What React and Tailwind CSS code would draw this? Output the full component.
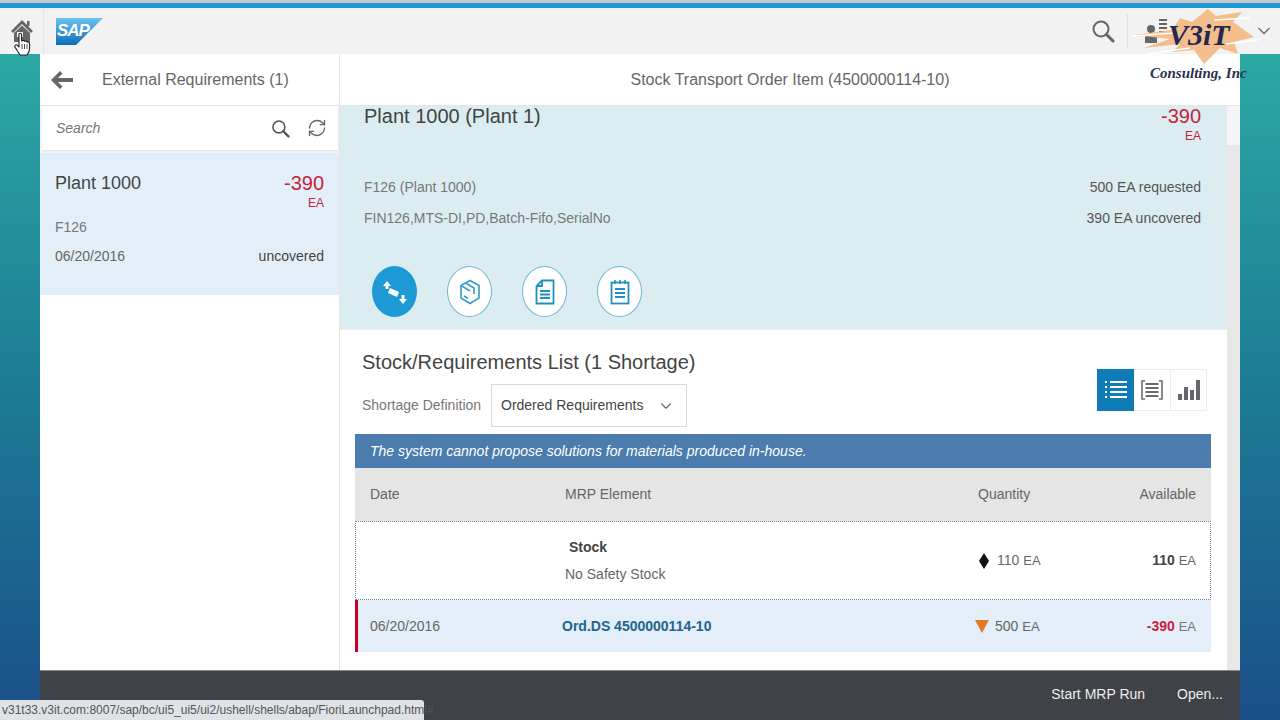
import React from "react";
import { ChevronDown, RefreshCw } from "lucide-react";

const font = { fontFamily: '"Liberation Sans", Arial, sans-serif' };

const SearchIcon = ({ size = 20, className = "" }) => (
  <svg width={size} height={size} viewBox="0 0 24 24" fill="none" className={className}>
    <circle cx="10" cy="10" r="7.5" stroke="currentColor" strokeWidth="2" />
    <path d="M15.5 15.5 L22 22" stroke="currentColor" strokeWidth="3" strokeLinecap="round" />
  </svg>
);

const HomeIcon = () => (
  <svg width="22" height="24" viewBox="0 0 22 24" className="text-[#666]">
    <path d="M0 12 L11 1 L22 12 L20 14 L11 5 L2 14 Z" fill="currentColor" />
    <path d="M3 14 L11 6.5 L19 14 V23 H3 Z" fill="currentColor" />
    <rect x="6" y="13" width="6" height="5" fill="#f2f2f2" />
    <rect x="16" y="2" width="2.5" height="5" fill="currentColor" />
  </svg>
);

const HandCursor = () => (
  <svg width="18" height="24" viewBox="0 0 18 24">
    <path
      d="M5 2.5 C5 .8 7.6 .8 7.6 2.5 V9 C8.5 8 10 8.2 10.4 9.3 C11.2 8.6 12.8 8.9 13 10.2 C14 9.7 15.6 10.2 15.6 11.8 V16.5 C15.6 19.5 14 21.5 13 23 H6 C4.5 20.5 2.5 17.5 1 15 C.2 13.5 2 12 3.4 13.4 L5 15 Z"
      fill="#fff"
      stroke="#222"
      strokeWidth="1.1"
      strokeLinejoin="round"
    />
    <path d="M8 12 V17 M10.5 12 V17 M13 12 V17" stroke="#222" strokeWidth="0.8" />
  </svg>
);

const SapLogo = () => (
  <div className="relative h-[27px] w-[47px]">
    <svg width="47" height="27" viewBox="0 0 47 27" className="block">
      <defs>
        <linearGradient id="sapBlue" x1="0" y1="0" x2="0" y2="1">
          <stop offset="0" stopColor="#6cc5ee" />
          <stop offset="1" stopColor="#0f6cb8" />
        </linearGradient>
      </defs>
      <path d="M0 0 H47 L20 27 H0 Z" fill="url(#sapBlue)" />
    </svg>
    <span className="absolute left-[1px] top-[3px] text-[17px] font-bold italic leading-[20px] tracking-[-1px] text-white">
      SAP
    </span>
  </div>
);

const UserIcon = () => (
  <svg width="24" height="26" viewBox="0 0 24 26" className="text-[#666]">
    <circle cx="7" cy="11" r="4" fill="currentColor" />
    <path d="M1 25 V20 C1 17 4 16 7 16 C10 16 13 17 13 20 V25 Z" fill="currentColor" />
    <path d="M15 2 H23 M15 6 H23 M15 10 H23 M15 14 H21" stroke="currentColor" strokeWidth="2" />
  </svg>
);

const TransferIcon = () => (
  <svg width="26" height="28" viewBox="0 0 26 28" fill="#fff">
    <path d="M3 3 L7 8 H4.5 V11 H1.5 V8 H-1 Z" transform="translate(2 0)" />
    <path d="M8 10 L17 14 L15 19 L6 15 Z" />
    <path d="M21 26 L17 21 H19.5 V17 H22.5 V21 H25 Z" />
  </svg>
);

const BoxIcon = () => (
  <svg width="22" height="26" viewBox="0 0 22 26" fill="none" stroke="#3d9fc9" strokeWidth="1.7">
    <path d="M11 1.5 L20 6.5 V19 L11 24.5 L2 19 V6.5 Z" />
    <path d="M6.5 4 L15 9 V15 M2 6.5 L11 12" />
    <path d="M5 17 L9 19.5" />
  </svg>
);

const DocIcon = () => (
  <svg width="20" height="26" viewBox="0 0 20 26" fill="none" stroke="#1f8fc4" strokeWidth="1.8">
    <path d="M7 1.5 H18.5 V24.5 H1.5 V7 Z" />
    <path d="M1.5 7 H7 V1.5" />
    <path d="M5 12 H15 M5 15.5 H15 M5 19 H15" strokeWidth="2" />
  </svg>
);

const NoteIcon = () => (
  <svg width="20" height="26" viewBox="0 0 20 26" fill="none" stroke="#1f8fc4" strokeWidth="1.8">
    <rect x="1.5" y="3.5" width="17" height="21" />
    <path d="M5 1 V5 M10 1 V5 M15 1 V5" strokeWidth="1.6" />
    <path d="M5 10 H15 M5 14 H15 M5 18 H15" strokeWidth="2" />
  </svg>
);

const ListIcon = () => (
  <svg width="24" height="24" viewBox="0 0 24 24" fill="none" stroke="#fff" strokeWidth="2">
    <path d="M1 4 H3 M1 9 H3 M1 14 H3 M1 19 H3 M6 4 H23 M6 9 H23 M6 14 H23 M6 19 H23" />
  </svg>
);

const BracketIcon = () => (
  <svg width="22" height="20" viewBox="0 0 22 20" fill="none" stroke="#6a6a6a" strokeWidth="1.6">
    <path d="M4 1 H1 V19 H4 M18 1 H21 V19 H18" />
    <path d="M4.5 4 H17.5 M4.5 8 H17.5 M4.5 12 H17.5 M4.5 16 H17.5" strokeWidth="2" />
  </svg>
);

const BarsIcon = () => (
  <svg width="22" height="20" viewBox="0 0 22 20" fill="#66666e">
    <rect x="0" y="14" width="4" height="6" />
    <rect x="6" y="7" width="4" height="13" />
    <rect x="12" y="10" width="4" height="10" />
    <rect x="18" y="0" width="4" height="20" />
  </svg>
);

const Watermark = () => (
  <div className="absolute left-[1130px] top-[4px] h-[80px] w-[140px]">
    <svg width="140" height="62" viewBox="0 0 140 62" className="absolute left-0 top-0">
      <path
        d="M4 31 L42 26 L50 14 L62 18 L78 5 L86 12 L112 8 L103 18 L124 33 L104 38 L108 50 L90 44 L74 60 L64 46 L42 48 L50 40 L14 44 L40 35 Z"
        fill="#f4bd8c"
      />
      <path d="M2 32 L44 29 M60 44 L18 50 M84 16 L120 14 M96 40 L128 36" stroke="#fff" strokeWidth="1.5" />
    </svg>
    <span
      className="absolute left-[38px] top-[14px] text-[30px] font-bold italic leading-[34px] text-[#232850]"
      style={{ fontFamily: '"Liberation Serif", serif' }}
    >
      V3iT
    </span>
    <span
      className="absolute left-[20px] top-[60px] whitespace-nowrap text-[15px] font-bold italic leading-[18px] text-[#2b3050]"
      style={{ fontFamily: '"Liberation Serif", serif' }}
    >
      Consulting, Inc
    </span>
  </div>
);

const IconTab = ({ active, children }) => (
  <div className="flex w-[45px] flex-col items-center">
    <div
      className={
        active
          ? "flex h-[51px] w-[45px] items-center justify-center rounded-[50%] bg-[#1d9ad6]"
          : "flex h-[51px] w-[45px] items-center justify-center rounded-[50%] border border-[#6fb4d2] bg-white"
      }
    >
      {children}
    </div>
    <div className={active ? "mt-[14px] h-[4px] w-[45px] bg-[#1d93cf]" : "mt-[14px] h-[4px] w-[45px]"} />
  </div>
);

export default function App() {
  return (
    <div
      className="relative flex h-[720px] w-[1280px] flex-col overflow-hidden bg-gradient-to-b from-[#2fb0a6] via-[#1d7f96] to-[#1b4f88]"
      style={font}
    >
      <div className="h-[3px] bg-[#c9c9c9]" />
      <div className="h-[5px] bg-[#1e9bd7]" />

      {/* shell header */}
      <header className="flex h-[46px] items-center bg-[#f2f2f2]">
        <div className="relative flex h-[46px] w-[44px] items-center justify-center border-r border-[#e4e4e4]">
          <HomeIcon />
          <div className="absolute left-[14px] top-[24px]">
            <HandCursor />
          </div>
        </div>
        <div className="ml-[12px]">
          <SapLogo />
        </div>
        <div className="ml-auto flex items-center">
          <SearchIcon size={24} className="text-[#666]" />
          <div className="ml-[12px] h-[34px] w-px bg-[#e0e0e0]" />
          <div className="ml-[16px]">
            <UserIcon />
          </div>
          <span className="ml-[6px] text-[13px] text-[#888]">dmin</span>
          <ChevronDown size={20} className="ml-[52px] mr-[6px] text-[#777]" />
        </div>
      </header>

      {/* main panels */}
      <div className="mx-[40px] flex h-[616px] bg-white">
        <aside className="flex w-[300px] flex-col border-r border-[#e5e5e5]">
          <div className="flex h-[52px] items-center border-b border-[#e6e6e6]">
            <svg width="22" height="18" viewBox="0 0 22 18" fill="#666" className="ml-[11px]">
              <path d="M9 0 L11.5 2.5 L7 7 H22 V11 H7 L11.5 15.5 L9 18 L0 9 Z" />
            </svg>
            <span className="ml-[29px] text-[16px] text-[#666]">External Requirements (1)</span>
          </div>
          <div className="flex h-[47px] items-center bg-[#f7f7f7] pl-[2px] pb-[3px]">
            <div className="flex h-[44px] w-[296px] items-center bg-white pl-[14px] shadow-[0_1px_2px_#ddd]">
              <span className="text-[14px] italic text-[#777]">Search</span>
              <SearchIcon size={19} className="ml-auto text-[#555]" />
              <RefreshCw size={20} strokeWidth={1.6} className="ml-[17px] mr-[11px] text-[#666]" />
            </div>
          </div>
          <div className="h-[142px] bg-[#e3eff8] px-[15px] pt-[18px]">
            <div className="flex justify-between">
              <span className="text-[18px] leading-[24px] text-[#444]">Plant 1000</span>
              <span className="text-[20px] leading-[24px] text-[#c4233d]">-390</span>
            </div>
            <div className="text-right text-[12px] leading-[16px] text-[#c4233d]">EA</div>
            <div className="mt-[6px] text-[14px] leading-[20px] text-[#777]">F126</div>
            <div className="mt-[9px] flex justify-between text-[14px] leading-[20px]">
              <span className="text-[#666]">06/20/2016</span>
              <span className="text-[#444]">uncovered</span>
            </div>
          </div>
        </aside>

        <section className="flex min-w-0 flex-1 flex-col">
          <div className="flex h-[52px] shrink-0 items-center justify-center border-b border-[#e6e6e6] text-[16px] text-[#666]">
            Stock Transport Order Item (4500000114-10)
          </div>
          <div className="flex min-h-0 flex-1">
            <div className="w-[887px]">
              <div className="h-[224px] overflow-hidden border-b-2 border-[#e3ecf0] bg-[#dcedf2]">
                <div className="flex h-[71px] justify-between pl-[24px] pr-[26px]">
                  <span className="text-[20px] leading-[20px] text-[#444]">Plant 1000 (Plant 1)</span>
                  <div className="text-right">
                    <div className="text-[20px] leading-[20px] text-[#c4233d]">-390</div>
                    <div className="mt-[2px] text-[12px] leading-[16px] text-[#c4233d]">EA</div>
                  </div>
                </div>
                <div className="flex justify-between pl-[24px] pr-[26px] text-[14px] leading-[20px]">
                  <span className="text-[#777]">F126 (Plant 1000)</span>
                  <span className="text-[#555]">500 EA requested</span>
                </div>
                <div className="mt-[11px] flex justify-between pl-[24px] pr-[26px] text-[14px] leading-[20px]">
                  <span className="text-[#777]">FIN126,MTS-DI,PD,Batch-Fifo,SerialNo</span>
                  <span className="text-[#555]">390 EA uncovered</span>
                </div>
                <div className="ml-[32px] mt-[38px] flex gap-[30px]">
                  <IconTab active>
                    <TransferIcon />
                  </IconTab>
                  <IconTab>
                    <BoxIcon />
                  </IconTab>
                  <IconTab>
                    <DocIcon />
                  </IconTab>
                  <IconTab>
                    <NoteIcon />
                  </IconTab>
                </div>
              </div>

              <div className="flex h-[104px] justify-between pl-[22px] pr-[20px]">
                <div>
                  <h2 className="mt-[19px] text-[20px] leading-[26px] text-[#444]">Stock/Requirements List (1 Shortage)</h2>
                  <div className="mt-[9px] flex items-center">
                    <span className="w-[129px] text-[14px] text-[#777]">Shortage Definition</span>
                    <div className="flex h-[43px] w-[196px] items-center justify-between border border-[#d9d9d9] bg-white pl-[9px] pr-[11px]">
                      <span className="text-[14px] text-[#444]">Ordered Requirements</span>
                      <ChevronDown size={18} strokeWidth={1.5} className="text-[#666]" />
                    </div>
                  </div>
                </div>
                <div className="mt-[39px] flex h-[42px]">
                  <div className="flex w-[37px] items-center justify-center bg-[#0f7cb8]">
                    <ListIcon />
                  </div>
                  <div className="flex w-[37px] items-center justify-center border border-l-0 border-[#ececec]">
                    <BracketIcon />
                  </div>
                  <div className="flex w-[36px] items-center justify-center border border-l-0 border-[#ececec]">
                    <BarsIcon />
                  </div>
                </div>
              </div>

              <div className="ml-[15px] w-[856px]">
                <div className="flex h-[34px] items-center bg-[#4b7cad] pl-[15px] text-[14px] italic text-white">
                  The system cannot propose solutions for materials produced in-house.
                </div>
                <div className="grid h-[53px] grid-cols-[195px_413px_1fr_100px] items-center bg-[#e5e5e5] pl-[15px] pr-[15px] text-[14px] text-[#666]">
                  <span>Date</span>
                  <span>MRP Element</span>
                  <span>Quantity</span>
                  <span className="text-right">Available</span>
                </div>
                <div className="grid h-[79px] grid-cols-[195px_413px_1fr_100px] items-center border border-dotted border-[#6d8b97] bg-white pl-[14px] pr-[14px] text-[14px]">
                  <span />
                  <div>
                    <div className="text-[14px] font-bold leading-[20px] text-[#444]">&nbsp;Stock</div>
                    <div className="mt-[7px] leading-[20px] text-[#666]">No Safety Stock</div>
                  </div>
                  <div className="flex items-center text-[#666]">
                    <svg width="12" height="16" viewBox="0 0 12 16" className="ml-0">
                      <path d="M6 0 L11 8 L6 16 L1 8 Z" fill="#111" />
                    </svg>
                    <span className="ml-[7px]">
                      110 <span className="text-[13px]">EA</span>
                    </span>
                  </div>
                  <span className="text-right text-[#666]">
                    <b className="text-[#444]">110</b> <span className="text-[13px]">EA</span>
                  </span>
                </div>
                <div className="grid h-[52px] grid-cols-[192px_413px_1fr_100px] items-center border-l-[3px] border-[#c4002b] bg-[#e3eef8] pl-[12px] pr-[15px] text-[14px]">
                  <span className="text-[#666]">06/20/2016</span>
                  <span className="font-bold text-[#22648f]">Ord.DS 4500000114-10</span>
                  <div className="flex items-center text-[#666]">
                    <svg width="14" height="14" viewBox="0 0 14 14">
                      <path d="M0 1 H14 L7 14 Z" fill="#e07b28" />
                    </svg>
                    <span className="ml-[6px]">
                      500 <span className="text-[13px]">EA</span>
                    </span>
                  </div>
                  <span className="text-right">
                    <b className="text-[#c4233d]">-390</b> <span className="text-[13px] text-[#777]">EA</span>
                  </span>
                </div>
              </div>
            </div>
            <div className="flex-1 bg-[#e8e8e8]">
              <div className="h-[39px] bg-[#f5f5f5]" />
            </div>
          </div>
        </section>
      </div>

      {/* footer */}
      <footer className="mx-[40px] flex h-[50px] items-center justify-end border-t border-[#888] bg-[#3f4246] pb-[2px] pr-[17px] text-[14px] text-[#eee]">
        <span>Start MRP Run</span>
        <span className="ml-[32px]">Open...</span>
      </footer>

      {/* browser status bubble */}
      <div className="absolute bottom-0 left-0 flex h-[20px] w-[424px] items-center rounded-tr-[3px] bg-[#dfe2e6] pl-[2px] text-[12px] text-[#555]">
        <span className="whitespace-nowrap">v31t33.v3it.com:8007/sap/bc/ui5_ui5/ui2/ushell/shells/abap/FioriLaunchpad.html#</span>
      </div>

      <Watermark />
    </div>
  );
}
